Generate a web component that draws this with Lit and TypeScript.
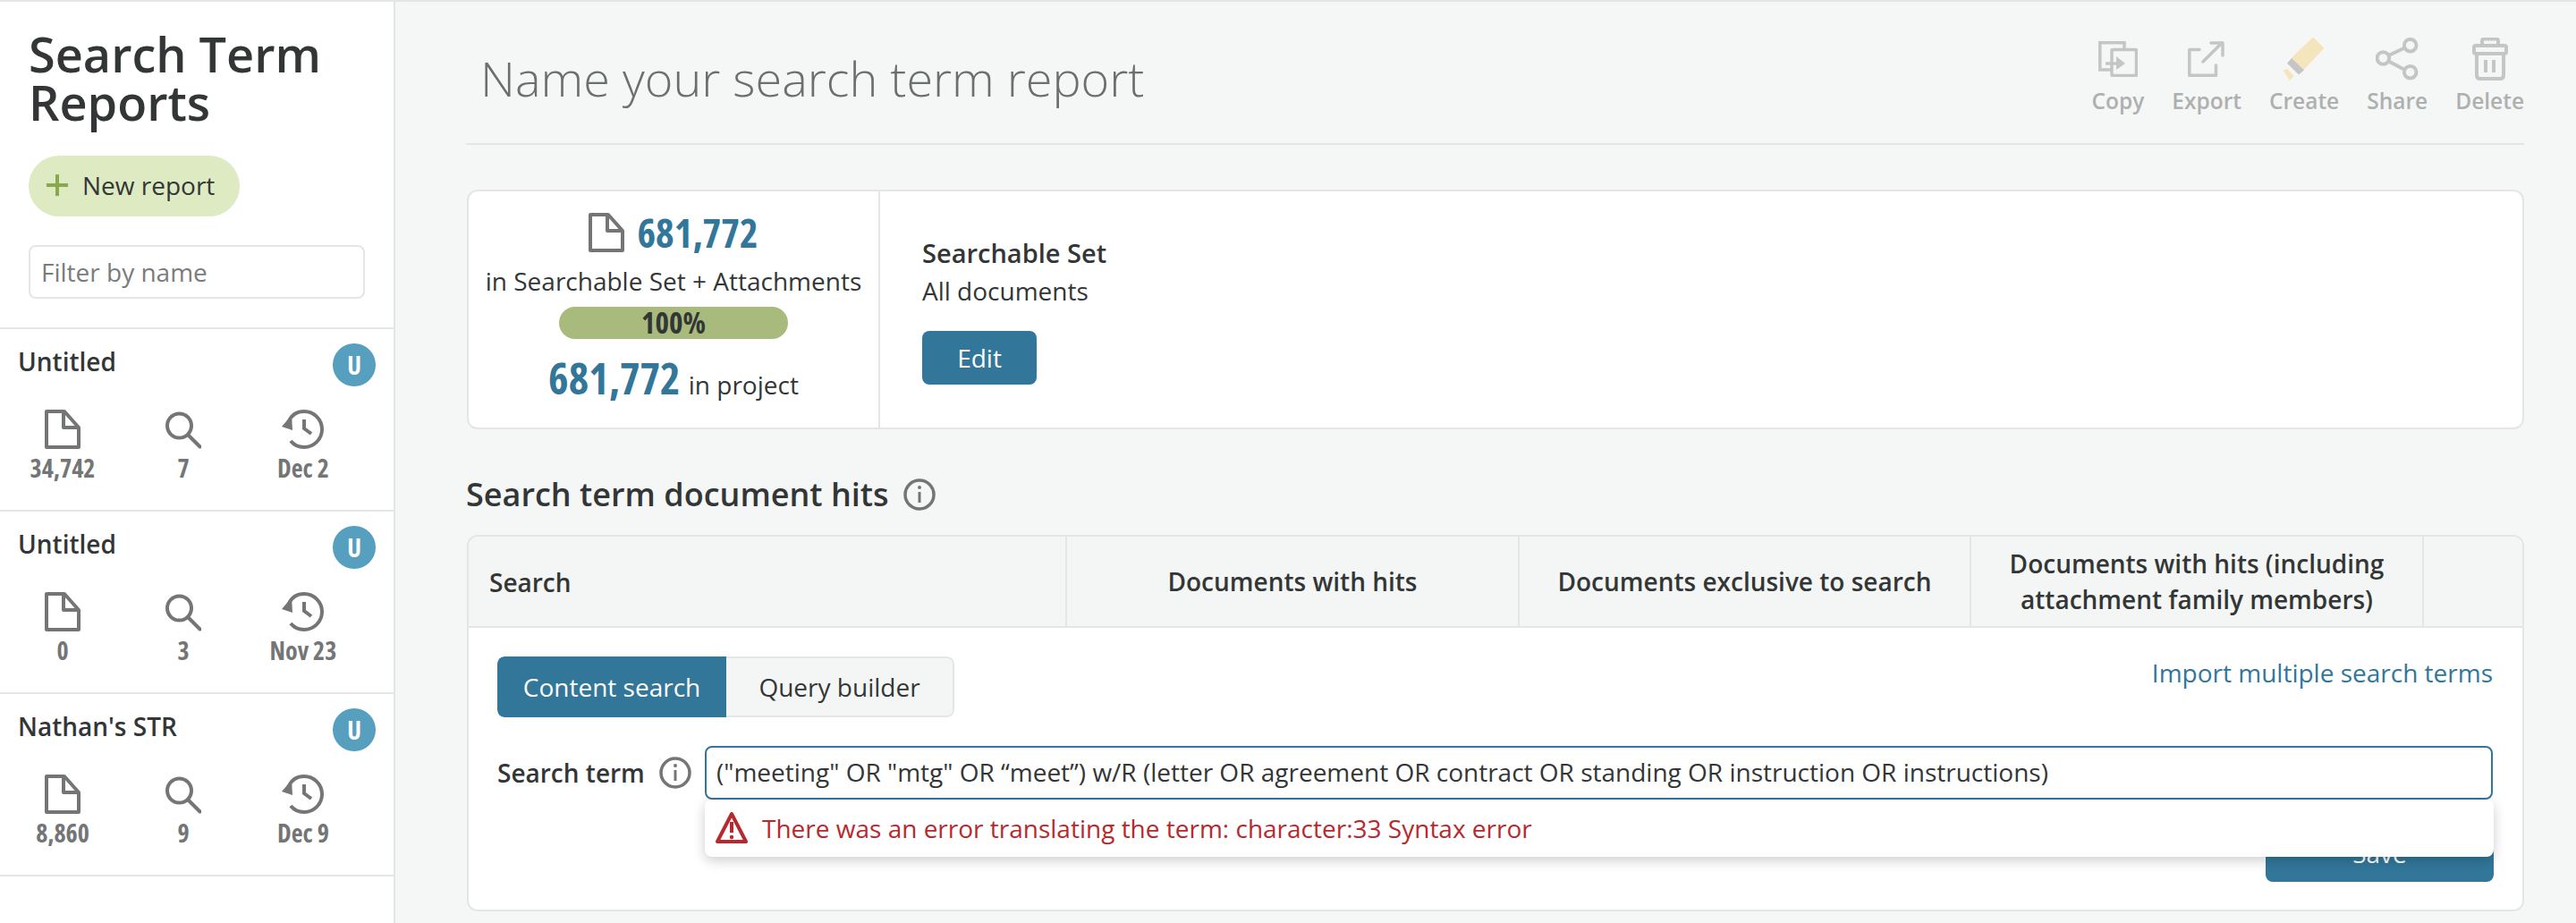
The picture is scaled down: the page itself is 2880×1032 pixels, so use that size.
import { LitElement, html, css } from "lit";
import { customElement } from "lit/decorators.js";

const fileIcon = html`<svg class="ic" width="40" height="44" viewBox="0 0 40 44" fill="none" stroke="#737576" stroke-width="4" stroke-linejoin="round"><path d="M2 2H22L38 20V42H2Z"/><path d="M21 2V20H38"/></svg>`;
const searchIcon = html`<svg class="ic" width="40" height="44" viewBox="0 0 40 44" fill="none" stroke="#737576" stroke-width="4"><circle cx="15.5" cy="18" r="13.5"/><path d="M25 28L38.5 41.5" stroke-linecap="round"/></svg>`;
const historyIcon = html`<svg class="ic" width="48" height="44" viewBox="0 0 48 44" fill="none" stroke="#737576" stroke-width="4"><path d="M8 13C11 6 17 2 25 2C36 2 45 11 45 22C45 33 36 42 25 42C19 42 14 40 10 35"/><path d="M25 11V21L33 27" stroke-width="4"/><path d="M0 19L11 6L12 23Z" fill="#737576" stroke="none"/></svg>`;

const copyIcon = html`<svg width="44" height="40" viewBox="0 0 44 40" fill="none" stroke="#c4c6c6" stroke-width="3.5"><path d="M14 32H1.8V1.8H29V9"/><rect x="15" y="9.5" width="27.5" height="29" rx="1"/><path d="M8 25H21"/><path d="M20 17L30 25L20 32Z" fill="#c4c6c6" stroke="none"/></svg>`;
const exportIcon = html`<svg width="42" height="40" viewBox="0 0 42 40" fill="none" stroke="#c4c6c6" stroke-width="3.5" stroke-linecap="round" stroke-linejoin="round"><path d="M13 9.5H1.8V38.3H31.5V27"/><path d="M17 23L38 2"/><path d="M26 2H39V16"/></svg>`;
const createIcon = html`<svg width="48" height="48" viewBox="0 0 48 48"><path d="M34 0L46 12L23 36L10 23Z" fill="#f5e5bd" stroke="#f5e5bd" stroke-linejoin="round"/><path d="M10 23L24 36.5L18 41.5L5 28.7Z" fill="#c4c6c6"/><path d="M.5 37L8 48L12.6 43L5 34.7Z" fill="#f5e5bd"/></svg>`;
const shareIcon = html`<svg width="48" height="48" viewBox="0 0 48 48" fill="none" stroke="#c4c6c6" stroke-width="4"><circle cx="38.7" cy="8.7" r="6.8"/><circle cx="8.4" cy="23" r="6.8"/><circle cx="38.7" cy="38.7" r="6.8"/><path d="M14.5 20L32.5 11.5M14.5 26.5L32.5 36"/></svg>`;
const deleteIcon = html`<svg width="40" height="48" viewBox="0 0 40 48" fill="none" stroke="#c4c6c6" stroke-width="4" stroke-linejoin="round"><rect x="2" y="9" width="36" height="9" rx="2"/><path d="M11 9V4C11 2.5 12 1.5 13.5 1.5H26.5C28 1.5 29 2.5 29 4V9"/><path d="M5 18V42C5 44.5 6.5 46 9 46H31C33.5 46 35 44.5 35 42V18"/><path d="M15 25V39M24 25V39"/></svg>`;
const infoIcon = html`<svg width="36" height="36" viewBox="0 0 36 36" fill="none" stroke="#737576" stroke-width="3.5"><circle cx="18" cy="18" r="16"/><path d="M18 15V27" stroke-width="3"/><circle cx="18" cy="10" r="2" fill="#737576" stroke="none"/></svg>`;
const warnIcon = html`<svg width="36" height="36" viewBox="0 0 36 36" fill="none" stroke="#b62a2f" stroke-width="4" stroke-linejoin="round"><path d="M18 2L34 33H2Z"/><path d="M18 11V23"/><circle cx="18" cy="28" r="2.2" fill="#b62a2f" stroke="none"/></svg>`;

const reports = [
  { name: "Untitled", docs: "34,742", terms: "7", date: "Dec 2" },
  { name: "Untitled", docs: "0", terms: "3", date: "Nov 23" },
  { name: "Nathan's STR", docs: "8,860", terms: "9", date: "Dec 9" },
];
const actions = [
  { label: "Copy", icon: copyIcon },
  { label: "Export", icon: exportIcon },
  { label: "Create", icon: createIcon },
  { label: "Share", icon: shareIcon },
  { label: "Delete", icon: deleteIcon },
];

@customElement("app-root")
export class AppRoot extends LitElement {
  static styles = css`
    :host {
      display: block;
      width: 2880px;
      height: 1032px;
      overflow: hidden;
      background: #f5f7f6;
      border-top: 2px solid #e4e6e6;
      box-sizing: border-box;
      font-family: "Open Sans", sans-serif;
      font-size: 28px;
      color: #333636;
    }
    * { box-sizing: border-box; }
    svg { display: block; }
    .layout { display: grid; grid-template-columns: 442px 1fr; height: 1030px; }

    .side { background: #fff; border-right: 2px solid #e4e6e6; }
    .side-top { padding: 0 32px; height: 366px; border-bottom: 2px solid #e4e6e6; }
    h1 { margin: 0; padding-top: 31px; font-size: 54px; line-height: 54px; font-weight: 600; color: #333636; width: 380px; }
    .new { display: inline-flex; align-items: center; gap: 16px; margin-top: 33px; height: 68px; width: 236px; padding-left: 20px; padding-bottom: 2px; background: #deeac2; border-radius: 34px; white-space: nowrap; }
    .filter { margin-top: 32px; height: 60px; width: 376px; border: 2px solid #e4e6e6; border-radius: 8px; padding-left: 12px; line-height: 56px; color: #7a7c7c; }
    .report { height: 204px; border-bottom: 2px solid #e4e6e6; padding: 16px 20px 0 20px; }
    .r-head { display: flex; justify-content: space-between; height: 74px; }
    .r-name { font-weight: 600; line-height: 40px; }
    .badge { width: 48px; height: 48px; border-radius: 50%; background: #569fbe; color: #fff; font-weight: 700; font-stretch: 75%; display: flex; align-items: center; justify-content: center; }
    .stats { display: grid; grid-template-columns: 100px 170px 98px; justify-items: center; }
    .stat { display: flex; flex-direction: column; align-items: center; }
    .stat b { font-weight: 700; font-stretch: 75%; line-height: 38px; margin-top: 2px; color: #737576; white-space: nowrap; }

    .main { padding: 0 58px 0 79px; min-width: 0; }
    .top { height: 160px; border-bottom: 2px solid #e4e6e6; display: flex; justify-content: space-between; padding: 0 0 0 16px; }
    .title { font-size: 54px; font-weight: 300; color: #6c6f6f; margin-top: 47px; line-height: 76px; }
    .acts { display: flex; gap: 31px; margin-top: 40px; align-items: flex-start; }
    .act { display: flex; flex-direction: column; align-items: center; font-size: 24.5px; font-weight: 600; color: #aeb0b0; }
    .act .ai { height: 48px; display: flex; align-items: center; }
    .act span { margin-top: 3px; line-height: 40px; white-space: nowrap; }

    .card { background: #fff; border: 2px solid #e4e6e6; border-radius: 12px; }
    .set { margin: 50px 0 0 1px; height: 268px; display: flex; }
    .counts { width: 460px; border-right: 2px solid #e4e6e6; display: flex; flex-direction: column; align-items: center; padding-top: 24px; }
    .c1 { display: flex; align-items: flex-end; gap: 14px; height: 44px; }
    .num { font-weight: 700; font-stretch: 75%; color: #32769a; font-size: 44px; line-height: 44px; }
    .c2 { margin-top: 10px; line-height: 44px; white-space: nowrap; }
    .bar { margin-top: 7px; width: 256px; height: 36px; border-radius: 18px; background: #a8bb7c; text-align: center; font-weight: 700; font-stretch: 75%; font-size: 33px; line-height: 36px; }
    .c3 { margin-top: 17px; white-space: nowrap; line-height: 68px; }
    .c3 .num { font-size: 48px; margin-right: 2px; }
    .info { padding: 49px 0 0 47px; }
    .info b { display: block; font-weight: 600; line-height: 40px; font-size: 29px; }
    .info span { display: block; line-height: 44px; }
    .btn { background: #32769a; color: #fff; border-radius: 8px; display: flex; align-items: center; justify-content: center; }
    .edit { margin-top: 23px; width: 128px; height: 60px; }

    .h2 { display: flex; align-items: center; gap: 16px; margin-top: 51px; height: 44px; }
    .h2 h2 { margin: 0; font-size: 36px; font-weight: 600; line-height: 44px; }
    .tbl { margin: 23px 0 0 1px; height: 421px; position: relative; }
    .thead { display: grid; grid-template-columns: 669px 506px 505px 506px 1fr; height: 102px; background: #f4f6f5; border-bottom: 2px solid #e4e6e6; border-radius: 10px 10px 0 0; font-weight: 600; line-height: 40px; text-align: center; }
    .thead div { border-right: 2px solid #e4e6e6; display: flex; align-items: center; justify-content: center; }
    .thead div:first-child { justify-content: flex-start; padding-left: 23px; padding-top: 2px; }
    .thead div:last-child { border-right: 0; }
    .tbody { padding: 32px 33px 0 32px; }
    .row1 { display: flex; justify-content: space-between; align-items: flex-start; }
    .tabs { display: flex; height: 68px; width: 511px; border-radius: 8px; overflow: hidden; }
    .tab { flex: 1; display: flex; align-items: center; justify-content: center; background: #f4f6f5; border: 2px solid #e4e6e6; border-left: 0; border-radius: 0 8px 8px 0; padding-bottom: 1px; }
    .tab.on { background: #32769a; color: #fff; border: 0; border-radius: 8px 0 0 8px; flex: none; width: 256px; }
    .link { color: #32769a; line-height: 36px; }
    .row2 { display: flex; align-items: flex-start; margin-top: 32px; position: relative; }
    .lab { font-weight: 600; line-height: 60px; width: 181px; white-space: nowrap; }
    .ii { width: 51px; padding-top: 12px; }
    .inp { flex: 1; height: 60px; border: 2px solid #32769a; border-radius: 8px; padding-left: 11px; line-height: 54px; white-space: nowrap; }
    .err { position: absolute; left: 232px; right: -1px; top: 60px; height: 64px; background: #fff; border-radius: 8px; box-shadow: 0 4px 14px rgba(0,0,0,.2); display: flex; align-items: center; gap: 16px; padding-left: 12px; color: #b62a2f; z-index: 2; }
    .save { position: absolute; right: -1px; top: 88px; width: 255px; height: 64px; }
  `;

  render() {
    return html`<div class="layout">
      <aside class="side">
        <div class="side-top">
          <h1>Search Term Reports</h1>
          <div class="new">
            <svg width="24" height="24" viewBox="0 0 24 24" stroke="#8aa84e" stroke-width="4"><path d="M12 0V24M0 12H24"/></svg>
            New report
          </div>
          <div class="filter">Filter by name</div>
        </div>
        ${reports.map(r => html`<div class="report">
          <div class="r-head"><div class="r-name">${r.name}</div><div class="badge">U</div></div>
          <div class="stats">
            <div class="stat">${fileIcon}<b>${r.docs}</b></div>
            <div class="stat">${searchIcon}<b>${r.terms}</b></div>
            <div class="stat">${historyIcon}<b>${r.date}</b></div>
          </div>
        </div>`)}
      </aside>
      <main class="main">
        <div class="top">
          <div class="title">Name your search term report</div>
          <div class="acts">${actions.map(a => html`<div class="act"><div class="ai">${a.icon}</div><span>${a.label}</span></div>`)}</div>
        </div>
        <section class="card set">
          <div class="counts">
            <div class="c1">${fileIcon}<span class="num">681,772</span></div>
            <div class="c2">in Searchable Set + Attachments</div>
            <div class="bar">100%</div>
            <div class="c3"><span class="num">681,772</span> in project</div>
          </div>
          <div class="info">
            <b>Searchable Set</b>
            <span>All documents</span>
            <div class="btn edit">Edit</div>
          </div>
        </section>
        <div class="h2"><h2>Search term document hits</h2>${infoIcon}</div>
        <section class="card tbl">
          <div class="thead">
            <div>Search</div><div>Documents with hits</div><div>Documents exclusive to search</div>
            <div>Documents with hits (including<br />attachment family members)</div><div></div>
          </div>
          <div class="tbody">
            <div class="row1">
              <div class="tabs"><div class="tab on">Content search</div><div class="tab">Query builder</div></div>
              <div class="link">Import multiple search terms</div>
            </div>
            <div class="row2">
              <div class="lab">Search term</div>
              <div class="ii">${infoIcon}</div>
              <div class="inp">("meeting" OR "mtg" OR “meet”) w/R (letter OR agreement OR contract OR standing OR instruction OR instructions)</div>
              <div class="btn save">Save</div>
              <div class="err">${warnIcon}<span>There was an error translating the term: character:33 Syntax error</span></div>
            </div>
          </div>
        </section>
      </main>
    </div>`;
  }
}
